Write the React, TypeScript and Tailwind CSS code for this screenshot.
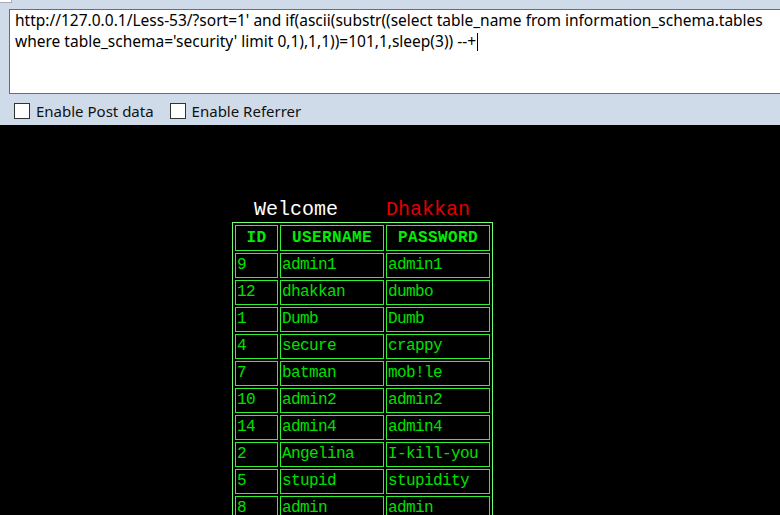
import React from "react";

const rows: [string, string, string][] = [
    ["9", "admin1", "admin1"],
    ["12", "dhakkan", "dumbo"],
    ["1", "Dumb", "Dumb"],
    ["4", "secure", "crappy"],
    ["7", "batman", "mob!le"],
    ["10", "admin2", "admin2"],
    ["14", "admin4", "admin4"],
    ["2", "Angelina", "I-kill-you"],
    ["5", "stupid", "stupidity"],
    ["8", "admin", "admin"],
];

const ui = { fontFamily: '"Noto Sans", "Open Sans", sans-serif' };
const mono = { fontFamily: '"Liberation Mono", "DejaVu Sans Mono", monospace' };

function Checkbox({ label }: { label: string }) {
    return (
        <label className="flex items-center gap-[6px] text-[15px] text-[#111]">
            <span className="w-4 h-4 bg-white border border-[#333]" />
            {label}
        </label>
    );
}

export default function App() {
    return (
        <main className="w-[780px] h-[515px] overflow-hidden bg-black relative">
            <div className="absolute left-0 top-0 w-3 h-[3px] bg-white border-b border-r border-[#aab]" />

            <header className="bg-[#d0dbea] h-[125px] pt-[9px] pl-[9px]" style={ui}>
                <div className="h-[85px] bg-white border border-r-0 border-[#2b7bd6] px-[5px] pt-0 text-[15.5px] leading-[21px] text-black whitespace-nowrap">
                    <div>
                        http://127.0.0.1/Less-53/?sort=1' and if(ascii(substr((select table_name from information_schema.tables
                    </div>
                    <div className="flex items-center">
                        where table_schema='security' limit 0,1),1,1))=101,1,sleep(3)) --+
                        <span className="inline-block w-px h-[18px] bg-black ml-px" />
                    </div>
                </div>
                <div className="flex items-center gap-4 pl-[5px] pt-[6px]">
                    <Checkbox label="Enable Post data" />
                    <Checkbox label="Enable Referrer" />
                </div>
            </header>

            <section className="pl-[232px] pt-[74px]" style={mono}>
                <div className="pl-[22px] h-[23px] text-[20px] leading-[22px] whitespace-pre">
                    <span className="text-white">Welcome    </span>
                    <span className="text-[#e00000]">Dhakkan</span>
                </div>
                <table className="border border-[#70ff70] border-separate border-spacing-[2px] text-[16px] tracking-[-0.6px] text-[#00e000]">
                    <thead>
                        <tr>
                            {["ID", "USERNAME", "PASSWORD"].map((h, i) => (
                                <th
                                    key={h}
                                    className={`border border-[#30f030] h-[26px] font-bold tracking-[0.4px] text-[#00ee00] text-center ${i === 0 ? "w-[43px]" : "w-[104px]"}`}
                                >
                                    {h}
                                </th>
                            ))}
                        </tr>
                    </thead>
                    <tbody>
                        {rows.map((r) => (
                            <tr key={r[0]}>
                                {r.map((c, i) => (
                                    <td key={i} className="border border-[#30f030] h-[25px] pl-px text-left leading-[23px]">
                                        {c}
                                    </td>
                                ))}
                            </tr>
                        ))}
                    </tbody>
                </table>
            </section>
        </main>
    );
}
